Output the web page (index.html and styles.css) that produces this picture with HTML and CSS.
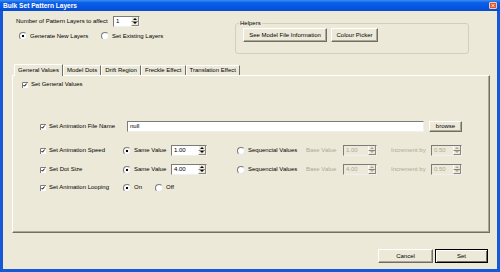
FILE: index.html
```html
<!DOCTYPE html>
<html lang="en">
<head>
    <meta charset="UTF-8">
    <meta name="viewport" content="width=device-width, initial-scale=1.0">
    <title>Bulk Set Pattern Layers</title>
    <link rel="stylesheet" href="styles.css">
</head>
<body>
    <div class="window">
        <div class="titlebar">
            <span class="title">Bulk Set Pattern Layers</span>
            <span class="close">
                <svg width="7" height="7" viewBox="0 0 7 7"><path d="M2 2L5 5M5 2L2 5" stroke="#fff" stroke-width="1.1"/></svg>
            </span>
        </div>
        <div class="client">
            <div class="top">
                <div class="layers">
                    <div class="count">
                        <span class="count-label">Number of Pattern Layers to affect</span>
                        <div class="spin spin-count">
                            <span class="spin-val">1</span>
                            <span class="spin-btns"><i class="up"></i><i class="down"></i></span>
                        </div>
                    </div>
                    <div class="modes">
                        <span class="radio on mode-gen">Generate New Layers</span>
                        <span class="radio">Set Existing Layers</span>
                    </div>
                </div>
                <fieldset class="helpers">
                    <legend>Helpers</legend>
                    <button class="btn model-btn">See Model File Information</button>
                    <button class="btn colour-btn">Colour Picker</button>
                </fieldset>
            </div>

            <div class="tabs">
                <span class="tab active">General Values</span>
                <span class="tab">Model Dots</span>
                <span class="tab">Drift Region</span>
                <span class="tab">Freckle Effect</span>
                <span class="tab">Translation Effect</span>
            </div>
            <div class="panel">
                <div class="check-label general">
                    <svg class="check" width="6" height="6" viewBox="0 0 6 6"><path d="M0 0H6V6H0Z" fill="#fff"/><path d="M0.5 6V0.5H6" fill="none" stroke="#7b7b7b"/><path d="M1.5 3L2.5 4.2L4.6 1.6" fill="none" stroke="#000"/></svg>
                    Set General Values
                </div>
                <div class="fields">
                    <div class="row row-file">
                        <div class="check-label field-label">
                            <svg class="check" width="6" height="6" viewBox="0 0 6 6"><path d="M0 0H6V6H0Z" fill="#fff"/><path d="M0.5 6V0.5H6" fill="none" stroke="#7b7b7b"/><path d="M1.5 3L2.5 4.2L4.6 1.6" fill="none" stroke="#000"/></svg>
                            Set Animation File Name
                        </div>
                        <div class="text-input">null</div>
                        <button class="btn browse-btn">browse</button>
                    </div>
                    <div class="row row-speed">
                        <div class="check-label field-label">
                            <svg class="check" width="6" height="6" viewBox="0 0 6 6"><path d="M0 0H6V6H0Z" fill="#fff"/><path d="M0.5 6V0.5H6" fill="none" stroke="#7b7b7b"/><path d="M1.5 3L2.5 4.2L4.6 1.6" fill="none" stroke="#000"/></svg>
                            Set Animation Speed
                        </div>
                        <span class="radio on same">Same Value</span>
                        <div class="spin spin-same">
                            <span class="spin-val">1.00</span>
                            <span class="spin-btns"><i class="up"></i><i class="down"></i></span>
                        </div>
                        <span class="radio seq">Sequencial Values</span>
                        <span class="dim base-label">Base Value</span>
                        <div class="spin spin-base off">
                            <span class="spin-val">1.00</span>
                            <span class="spin-btns"><i class="up"></i><i class="down"></i></span>
                        </div>
                        <span class="dim inc-label">Increment by</span>
                        <div class="spin spin-inc off">
                            <span class="spin-val">0.50</span>
                            <span class="spin-btns"><i class="up"></i><i class="down"></i></span>
                        </div>
                    </div>
                    <div class="row row-dot">
                        <div class="check-label field-label">
                            <svg class="check" width="6" height="6" viewBox="0 0 6 6"><path d="M0 0H6V6H0Z" fill="#fff"/><path d="M0.5 6V0.5H6" fill="none" stroke="#7b7b7b"/><path d="M1.5 3L2.5 4.2L4.6 1.6" fill="none" stroke="#000"/></svg>
                            Set Dot Size
                        </div>
                        <span class="radio on same">Same Value</span>
                        <div class="spin spin-same">
                            <span class="spin-val">4.00</span>
                            <span class="spin-btns"><i class="up"></i><i class="down"></i></span>
                        </div>
                        <span class="radio seq">Sequencial Values</span>
                        <span class="dim base-label">Base Value</span>
                        <div class="spin spin-base off">
                            <span class="spin-val">4.00</span>
                            <span class="spin-btns"><i class="up"></i><i class="down"></i></span>
                        </div>
                        <span class="dim inc-label">Increment by</span>
                        <div class="spin spin-inc off">
                            <span class="spin-val">0.50</span>
                            <span class="spin-btns"><i class="up"></i><i class="down"></i></span>
                        </div>
                    </div>
                    <div class="row row-loop">
                        <div class="check-label field-label">
                            <svg class="check" width="6" height="6" viewBox="0 0 6 6"><path d="M0 0H6V6H0Z" fill="#fff"/><path d="M0.5 6V0.5H6" fill="none" stroke="#7b7b7b"/><path d="M1.5 3L2.5 4.2L4.6 1.6" fill="none" stroke="#000"/></svg>
                            Set Animation Looping
                        </div>
                        <span class="radio on loop-on">On</span>
                        <span class="radio">Off</span>
                    </div>
                </div>
            </div>

            <div class="actions">
                <button class="btn cancel-btn">Cancel</button>
                <button class="btn default set-btn">Set</button>
            </div>
        </div>
    </div>
</body>
</html>
```

FILE: styles.css
```css
*{
    box-sizing: border-box;
}
body{
    margin: 0;
    font-family: "Liberation Sans", Arial, sans-serif;
    font-size: 6px;
    line-height: 7px;
    color: #000;
}
.window{
    width: 500px;
    height: 272px;
    display: flex;
    flex-direction: column;
}
.titlebar{
    height: 11px;
    display: flex;
    align-items: center;
    justify-content: space-between;
    padding: 0 3px 0 3px;
    background: linear-gradient(to bottom, #3d8ef5 0, #0b5fe6 25%, #0554e3 70%, #0a4cc8 100%);
}
.title{
    color: #fff;
    font-weight: bold;
    font-size: 6.6px;
}
.close{
    width: 8px;
    height: 7px;
    display: flex;
    border: 1px solid #f4c8b8;
    border-radius: 1px;
    background: #dd5a2e;
    align-items: center;
    justify-content: center;
}
.client{
    flex: 1;
    background: #ece9d8;
    border: 0 solid #1558d8;
    border-width: 0 3px 3px 3px;
    padding-top: 5px;
}

/* top area */
.top{
    display: flex;
    padding-left: 13px;
}
.layers{
    width: 219px;
}
.count{
    display: flex;
    align-items: center;
    height: 11px;
}
.count-label{
    width: 97px;
}
.modes{
    display: flex;
    align-items: center;
    height: 8px;
    margin-top: 5px;
    padding-left: 3px;
}
.mode-gen{
    width: 82px;
}
.helpers{
    margin: 4px 0 0 0;
    padding: 2px 7px 11px 7px;
    width: 234px;
    border: 1px solid #d0d0bf;
    border-radius: 3px;
    display: flex;
    gap: 4px;
    align-items: flex-start;
}
.helpers legend{
    padding: 0 1px;
    margin-left: -4px;
    line-height: 6px;
}

/* controls */
.btn{
    font: inherit;
    height: 14px;
    padding: 0;
    background: #ece9d8;
    border: 1px solid;
    border-color: #fff #716f64 #716f64 #fff;
    box-shadow: inset -1px -1px #aca899;
    color: #000;
}
.btn.default{
    border-color: #000;
    box-shadow: inset 1px 1px #fff, inset -1px -1px #716f64;
}
.model-btn{
    width: 84px;
}
.colour-btn{
    width: 47px;
}
.radio{
    display: flex;
    align-items: center;
    gap: 3px;
}
.radio::before{
    content: '';
    width: 6px;
    height: 6px;
    border-radius: 50%;
    border: 1px solid;
    border-color: #7b7b7b #e6e6e6 #e6e6e6 #7b7b7b;
    background: #fff;
}
.radio.on::before{
    background: radial-gradient(circle, #000 0 1.1px, #fff 1.6px);
}
.spin{
    display: flex;
    height: 11px;
    background: #fff;
    border: 1px solid;
    border-color: #7b7b7b #f0f0f0 #f0f0f0 #7b7b7b;
}
.spin-val{
    flex: 1;
    padding-left: 2px;
    line-height: 9px;
}
.spin-btns{
    width: 8px;
    display: flex;
    flex-direction: column;
}
.spin-btns i{
    flex: 1;
    display: flex;
    align-items: center;
    justify-content: center;
    background: #ece9d8;
    border: 1px solid;
    border-color: #fff #8a887c #8a887c #fff;
    border-width: 0 1px 1px 1px;
}
.spin-btns i::after{
    content: '';
    width: 0;
    height: 0;
    border-left: 2px solid transparent;
    border-right: 2px solid transparent;
}
.spin-btns .up::after{
    border-bottom: 2px solid #000;
}
.spin-btns .down::after{
    border-top: 2px solid #000;
}
.spin.off{
    background: #ece9d8;
    color: #aca899;
}
.spin.off .spin-btns i::after{
    border-top-color: #aca899;
    border-bottom-color: #aca899;
}
.spin-count{
    width: 27px;
}
.spin-same{
    width: 36px;
}
.spin-base{
    width: 34px;
}
.spin-inc{
    width: 31px;
}
.dim{
    color: #aca899;
}

/* tabs */
.tabs{
    display: flex;
    margin: 10px 0 0 11px;
    height: 11px;
    align-items: flex-end;
}
.tab{
    height: 10px;
    padding: 1px 3px 0;
    border-left: 1px solid #fff;
    border-top: 1px solid #fff;
    border-right: 1px solid #716f64;
    white-space: nowrap;
}
.tab.active{
    height: 12px;
    margin-bottom: -1px;
    padding-top: 2px;
    background: #ece9d8;
    position: relative;
}
.panel{
    margin-left: 9px;
    width: 478px;
    height: 158px;
    border: 1px solid;
    border-color: #fff #716f64 #716f64 #fff;
    box-shadow: inset -1px -1px #aca899;
    padding: 5px 0 0 9px;
}
.check-label{
    display: flex;
    align-items: center;
    gap: 3px;
    height: 7px;
    white-space: nowrap;
}
.fields{
    margin: 33px 0 0 18px;
}
.row{
    display: flex;
    align-items: center;
    height: 11px;
}
.row-speed{
    margin-top: 13px;
}
.row-dot{
    margin-top: 8px;
}
.row-loop{
    margin-top: 7px;
}
.field-label{
    width: 82px;
}
.text-input{
    width: 297px;
    height: 11px;
    margin-left: 5px;
    padding-left: 2px;
    line-height: 9px;
    background: #fff;
    border: 1px solid;
    border-color: #7b7b7b #f0f0f0 #f0f0f0 #7b7b7b;
}
.browse-btn{
    width: 33px;
    height: 11px;
    margin-left: 5px;
}
.same{
    width: 48px;
    margin-left: 1px;
}
.seq{
    width: 69px;
    margin-left: 30px;
}
.base-label{
    width: 37px;
}
.inc-label{
    width: 40px;
    margin-left: 14px;
}
.loop-on{
    width: 32px;
    margin-left: 1px;
}

/* bottom buttons */
.actions{
    display: flex;
    justify-content: flex-end;
    gap: 2px;
    margin: 16px 9px 0 0;
}
.cancel-btn{
    width: 55px;
}
.set-btn{
    width: 53px;
}
```
